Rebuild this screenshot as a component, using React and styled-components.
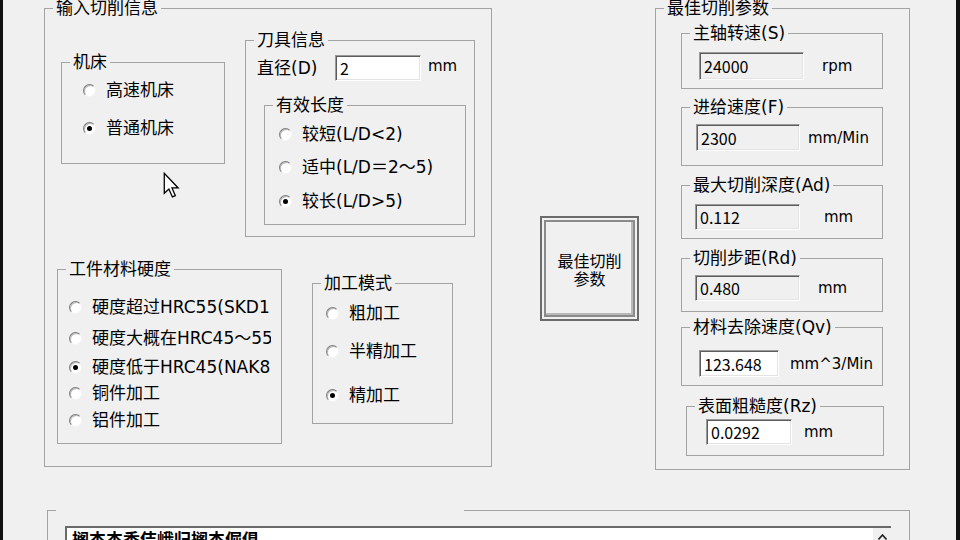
import React from "react";
import styled, { createGlobalStyle } from "styled-components";

const GlobalStyle = createGlobalStyle`
  html, body {
    margin: 0;
    padding: 0;
    background: #f0f0f0;
  }
  * {
    box-sizing: border-box;
  }
`;

const FONT = `"Noto Sans CJK SC", "Noto Sans", sans-serif`;
const LABEL_FONT = `"DejaVu Sans", "Noto Sans CJK SC", sans-serif`;

const Window = styled.div`
  position: relative;
  width: 960px;
  height: 540px;
  overflow: hidden;
  background: #f0f0f0;
  border-left: 3px solid #111;
  border-right: 4px solid #111;
  color: #000;
  font-family: ${LABEL_FONT};
  font-size: 17px;
`;

const TopRow = styled.div`
  display: flex;
  align-items: flex-start;
  padding-left: 41px;
`;

const Group = styled.fieldset`
  margin: ${(p) => p.$mt || 0}px 0 0 ${(p) => p.$ml || 0}px;
  padding: 0;
  min-width: 0;
  width: ${(p) => p.$w}px;
  height: ${(p) => p.$h}px;
  flex-shrink: 0;
  border: 1px solid #a3a3a3;
`;

const Legend = styled.legend`
  margin-left: 8px;
  padding: 0 3px;
  line-height: 20px;
  font-size: 17px;
  white-space: nowrap;
  width: ${(p) => (p.$w ? `${p.$w}px` : "auto")};
`;

const Row = styled.div`
  display: flex;
  align-items: flex-start;
  margin-top: ${(p) => p.$mt || 0}px;
  padding-left: ${(p) => p.$pl || 0}px;
`;

const OptionList = styled.div`
  padding-left: ${(p) => p.$pl}px;
`;

const Option = styled.div`
  display: flex;
  align-items: center;
  gap: 10px;
  height: 20px;
  margin-top: ${(p) => p.$mt}px;
  white-space: nowrap;
`;

const RadioDot = styled.span`
  position: relative;
  width: 13px;
  height: 13px;
  flex-shrink: 0;
  border-radius: 50%;
  background: #fff;
  border: 1px solid;
  border-color: #7c7c7c #f4f4f4 #f4f4f4 #7c7c7c;
  box-shadow: inset 1px 1px 0 #b9b9b9;

  &::after {
    content: "";
    display: ${(p) => (p.$on ? "block" : "none")};
    position: absolute;
    left: 3px;
    top: 3px;
    width: 5px;
    height: 5px;
    border-radius: 50%;
    background: #000;
  }
`;

const OptionText = styled.span`
  display: block;
  line-height: 20px;
  font-size: 17px;
  overflow: hidden;
  max-width: ${(p) => (p.$clip ? `${p.$clip}px` : "none")};
`;

const FieldLabel = styled.span`
  width: ${(p) => p.$w}px;
  line-height: 26px;
  font-size: 17px;
  white-space: nowrap;
`;

const Field = styled.input`
  width: ${(p) => p.$w}px;
  height: ${(p) => p.$h}px;
  margin: ${(p) => p.$mt || 0}px 0 0 ${(p) => p.$ml || 0}px;
  padding: 0 0 0 4px;
  flex-shrink: 0;
  border: 1px solid;
  border-color: #9a9a9a #ffffff #ffffff #9a9a9a;
  box-shadow: inset 1px 1px 0 #5c5c5c, inset -1px -1px 0 #e3e3e3;
  background: ${(p) => (p.$white ? "#ffffff" : "#f0f0f0")};
  font-family: ${FONT};
  font-size: 16px;
  color: #000;
  outline: none;
`;

const Unit = styled.span`
  margin-left: ${(p) => p.$ml}px;
  align-self: center;
  font-size: 15px;
  line-height: 20px;
  white-space: nowrap;
  margin-top: ${(p) => p.$mt || 0}px;
`;

const BigButton = styled.button`
  margin: 216px 0 0 48px;
  width: 99px;
  height: 105px;
  flex-shrink: 0;
  padding: 0;
  background: #f0f0f0;
  border: 2px solid #6b6b6b;
  box-shadow: inset 0 0 0 2px #f0f0f0, inset 0 0 0 4px #8a8a8a,
    inset -6px -6px 0 #b8b8b8;
  font-family: ${FONT};
  font-size: 16px;
  line-height: 18px;
  color: #000;
  text-align: center;
`;

const LogBox = styled.div`
  display: flex;
  margin: 6px 0 0 17px;
  width: 826px;
  height: 50px;
  background: #fff;
  border-top: 2px solid #6a6a6a;
  border-left: 2px solid #6a6a6a;
`;

const LogText = styled.div`
  flex: 1;
  padding: 1px 0 0 5px;
  font-family: ${FONT};
  font-size: 17px;
  line-height: 20px;
  font-weight: 700;
  white-space: nowrap;
`;

const ScrollBar = styled.div`
  width: 18px;
  background: #f0f0f0;
  display: flex;
  flex-direction: column;
`;

const ScrollButton = styled.div`
  height: 18px;
  display: flex;
  align-items: center;
  justify-content: center;
  background: #f0f0f0;
`;

const Cursor = styled.svg`
  position: absolute;
  left: 160px;
  top: 172px;
`;

const machines = [
  { text: "高速机床", mt: 8 },
  { text: "普通机床", mt: 18, on: true },
];

const lengths = [
  { text: "较短(L/D<2)", mt: 9 },
  { text: "适中(L/D＝2～5)", mt: 13 },
  { text: "较长(L/D>5)", mt: 14, on: true },
];

const hardness = [
  { text: "硬度超过HRC55(SKD11)", mt: 18 },
  { text: "硬度大概在HRC45～55", mt: 11 },
  { text: "硬度低于HRC45(NAK80)", mt: 9, on: true },
  { text: "铜件加工", mt: 6 },
  { text: "铝件加工", mt: 7 },
];

const modes = [
  { text: "粗加工", mt: 10 },
  { text: "半精加工", mt: 18 },
  { text: "精加工", mt: 24, on: true },
];

const results = [
  { title: "主轴转速(S)", value: "24000", unit: "rpm", mt: 5, h: 66, fw: 105, fh: 28, fmt: 9, fml: 17, uml: 18 },
  { title: "进给速度(F)", value: "2300", unit: "mm/Min", mt: 8, h: 69, fw: 104, fh: 27, fmt: 7, fml: 14, uml: 8 },
  { title: "最大切削深度(Ad)", value: "0.112", unit: "mm", mt: 9, h: 64, fw: 105, fh: 26, fmt: 9, fml: 13, uml: 24 },
  { title: "切削步距(Rd)", value: "0.480", unit: "mm", mt: 9, h: 64, fw: 105, fh: 26, fmt: 7, fml: 13, uml: 18 },
  { title: "材料去除速度(Qv)", value: "123.648", unit: "mm^3/Min", mt: 5, h: 69, fw: 80, fh: 27, fmt: 13, fml: 17, uml: 11, white: true },
  { title: "表面粗糙度(Rz)", value: "0.0292", unit: "mm", mt: 10, h: 60, fw: 86, fh: 26, fmt: 3, fml: 19, uml: 12, white: true, ml: 30, w: 198 },
];

const RadioGroup = ({ items, pl, clip }) => (
  <OptionList $pl={pl}>
    {items.map((it) => (
      <Option key={it.text} $mt={it.mt}>
        <RadioDot $on={it.on} />
        <OptionText $clip={clip}>{it.text}</OptionText>
      </Option>
    ))}
  </OptionList>
);

export default function App() {
  return (
    <>
      <GlobalStyle />
      <Window>
        <TopRow>
          <Group $w={448} $h={469} $mt={-2}>
            <Legend>输入切削信息</Legend>
            <Row $pl={16}>
              <Group $w={164} $h={112} $mt={34}>
                <Legend>机床</Legend>
                <RadioGroup items={machines} pl={21} />
              </Group>
              <Group $w={230} $h={207} $mt={12} $ml={20}>
                <Legend>刀具信息</Legend>
                <Row $mt={5} $pl={11}>
                  <FieldLabel $w={78}>直径(D)</FieldLabel>
                  <Field $w={86} $h={26} $white defaultValue="2" readOnly />
                  <Unit $ml={7} $mt={-4}>mm</Unit>
                </Row>
                <Group $w={202} $h={130} $mt={14} $ml={18}>
                  <Legend>有效长度</Legend>
                  <RadioGroup items={lengths} pl={14} />
                </Group>
              </Group>
            </Row>
            <Row $pl={12} $mt={22}>
              <Group $w={225} $h={185}>
                <Legend>工件材料硬度</Legend>
                <RadioGroup items={hardness} pl={11} clip={179} />
              </Group>
              <Group $w={141} $h={151} $mt={14} $ml={30}>
                <Legend>加工模式</Legend>
                <RadioGroup items={modes} pl={13} />
              </Group>
            </Row>
          </Group>

          <BigButton>
            最佳切削
            <br />
            参数
          </BigButton>

          <Group $w={255} $h={472} $mt={-2} $ml={16}>
            <Legend>最佳切削参数</Legend>
            {results.map((r) => (
              <Group key={r.title} $w={r.w || 202} $h={r.h} $mt={r.mt} $ml={r.ml || 25}>
                <Legend>{r.title}</Legend>
                <Row>
                  <Field
                    $w={r.fw}
                    $h={r.fh}
                    $mt={r.fmt}
                    $ml={r.fml}
                    $white={r.white}
                    defaultValue={r.value}
                    readOnly
                  />
                  <Unit $ml={r.uml} $mt={r.fmt}>{r.unit}</Unit>
                </Row>
              </Group>
            ))}
          </Group>
        </TopRow>

        <Group $w={863} $h={80} $mt={30} $ml={44}>
          <Legend $w={408}>{"\u00a0"}</Legend>
          <LogBox>
            <LogText>搁杰杰香佶峨归搁杰倔俱</LogText>
            <ScrollBar>
              <ScrollButton>
                <svg width="9" height="6" viewBox="0 0 9 6">
                  <path d="M0.5 5.5 L4.5 1 L8.5 5.5" fill="none" stroke="#222" strokeWidth="1.6" />
                </svg>
              </ScrollButton>
            </ScrollBar>
          </LogBox>
        </Group>

        <Cursor width="18" height="27" viewBox="0 0 14 21">
          <path
            d="M1 1 L1 16.5 L4.6 13.2 L7.3 19.4 L9.6 18.4 L7 12.4 L11.8 12.4 Z"
            fill="#fff"
            stroke="#000"
            strokeWidth="1"
            strokeLinejoin="miter"
          />
        </Cursor>
      </Window>
    </>
  );
}
